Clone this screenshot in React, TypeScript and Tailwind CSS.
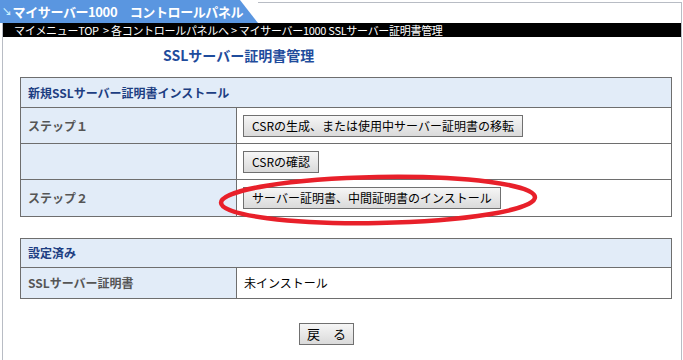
import React from 'react';

const font = { fontFamily: '"Noto Sans CJK JP", "Liberation Sans", sans-serif' };

function Btn({ children, className = '' }: { children: React.ReactNode; className?: string }) {
  return (
    <button
      type="button"
      className={`h-[22px] px-[8px] border border-[#707070] bg-gradient-to-b from-[#f6f6f6] to-[#dadada] text-[12px] leading-none text-black whitespace-nowrap ${className}`}
    >
      {children}
    </button>
  );
}

export default function App() {
  return (
    <div className="relative w-[683px] h-[360px] overflow-hidden bg-white" style={font}>
      {/* title tab */}
      <div className="flex h-[23px]">
        <div
          className="w-[258px] h-[23px] bg-[#5a96e0] flex items-center pl-[2px] text-white font-bold text-[13px] tracking-[-0.4px] whitespace-nowrap"
          style={{ clipPath: 'polygon(0 0, 240px 0, 258px 23px, 0 23px)' }}
        >
          <span className="text-[#c8f0ff] text-[10px] mr-[1px]">↘</span>
          マイサーバー1000　コントロールパネル
        </div>
        <div className="flex-1 mt-[2px] border-t border-r border-[#b8bcc4] mr-[1px]" />
      </div>

      <div className="ml-[2px] mr-[1px] h-[337px] border-x border-[#b8bcc4]">
        {/* breadcrumb */}
        <div className="h-[14px] bg-black text-white text-[11px] leading-[14px] pl-[11px] tracking-[-0.3px] whitespace-pre">
          マイメニューTOP  &gt; 各コントロールパネルへ &gt; マイサーバー1000 SSLサーバー証明書管理
        </div>

        <div className="pl-[160px] pt-[9px] text-[14px] font-bold text-[#1f4c9c] leading-[18px]">
          SSLサーバー証明書管理
        </div>

        {/* install table */}
        <table className="ml-[17px] mt-[13px] w-[652px] border-collapse text-[12px]">
          <tbody>
            <tr className="h-[30px] bg-[#e2ecf8]">
              <td colSpan={2} className="border border-[#6e6e6e] pl-[7px] font-bold text-[#1d3e82]">
                新規SSLサーバー証明書インストール
              </td>
            </tr>
            <tr className="h-[36px]">
              <td className="w-[216px] border border-[#6e6e6e] bg-[#e2ecf8] pl-[7px] font-bold text-[#555]">ステップ１</td>
              <td className="border border-[#6e6e6e] pl-[6px]">
                <Btn>CSRの生成、または使用中サーバー証明書の移転</Btn>
              </td>
            </tr>
            <tr className="h-[36px]">
              <td className="border border-[#6e6e6e] bg-[#e2ecf8]" />
              <td className="border border-[#6e6e6e] pl-[6px]">
                <Btn>CSRの確認</Btn>
              </td>
            </tr>
            <tr className="h-[37px]">
              <td className="border border-[#6e6e6e] bg-[#e2ecf8] pl-[7px] font-bold text-[#555]">ステップ２</td>
              <td className="border border-[#6e6e6e] pl-[6px]">
                <Btn>サーバー証明書、中間証明書のインストール</Btn>
              </td>
            </tr>
          </tbody>
        </table>

        {/* installed table */}
        <table className="ml-[17px] mt-[21px] w-[652px] border-collapse text-[12px]">
          <tbody>
            <tr className="h-[29px] bg-[#e2ecf8]">
              <td colSpan={2} className="border border-[#6e6e6e] pl-[7px] font-bold text-[#1d3e82]">
                設定済み
              </td>
            </tr>
            <tr className="h-[31px]">
              <td className="w-[216px] border border-[#6e6e6e] bg-[#e2ecf8] pl-[7px] font-bold text-[#555]">SSLサーバー証明書</td>
              <td className="border border-[#6e6e6e] pl-[7px] text-black">未インストール</td>
            </tr>
          </tbody>
        </table>

        <div className="pl-[296px] pt-[21px]">
          <Btn className="w-[55px] !px-0 text-[13px]">戻　る</Btn>
        </div>
      </div>

      {/* red marker ellipse */}
      <svg className="absolute left-0 top-0 pointer-events-none" width="683" height="360">
        <ellipse cx="378" cy="200" rx="157" ry="23" fill="none" stroke="#e8202a" strokeWidth="4.5" transform="rotate(-1 378 200)" />
      </svg>
    </div>
  );
}
